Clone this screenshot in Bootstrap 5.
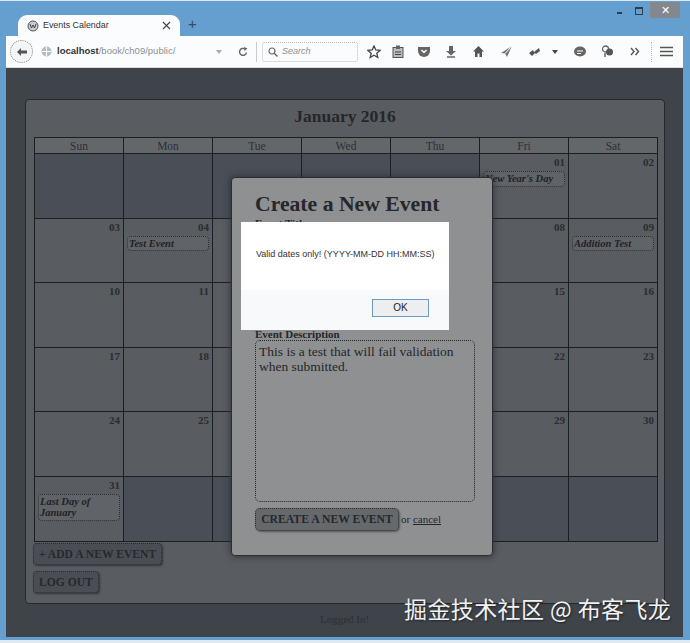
<!DOCTYPE html>
<html lang="en">
<head>
  <meta charset="UTF-8" />
  <title>Events Calendar</title>
  <link href="https://cdn.jsdelivr.net/npm/bootstrap@5.3.3/dist/css/bootstrap.min.css" rel="stylesheet">
  <style>
    html, body { height: 100%; }
    body { background: #dfe9f2; overflow: hidden; font-family: "Liberation Sans", sans-serif; }
    .win-frame { position: relative; width: 690px; height: 640px; padding: 1px 7px 4px 6px; background: #659fcf; border-top: 1px solid #dfe9f2; }
    .title-strip { height: 34px; }
    .tab-shape { width: 162px; height: 21px; margin-left: 12px; padding: 0 9px; background: #fbfcfd; border-radius: 9px 9px 0 0; font-size: 8.900px; color: #333; }
    .tab-x { margin-left: auto; }
    .plus-tab { margin-left: 8px; margin-bottom: 5px; font-size: 15px; line-height: 1; color: #3c4a58; }
    .win-btns { margin-left: auto; margin-right: 3px; align-self: flex-start; }
    .win-min { width: 5px; height: 2px; background: #2f3e4c; margin-right: 13px; margin-top: 10px; }
    .win-max { width: 8px; height: 8px; border: 1px solid #2f3e4c; border-top-width: 2px; margin-right: 7px; margin-top: 5px; }
    .win-close { width: 30px; height: 16px; background: #84888d; color: #fff; font-size: 11px; line-height: 16px; text-align: center; }
    .tool-strip { height: 32px; background: #fbfcfd; font-size: 9px; color: #555; padding-left: 4px; border-bottom: 1px solid #d8dadc; }
    .back-circle { width: 23px; height: 23px; border-radius: 50%; border: 1px dotted #8a8f94; background: #f4f5f6; }
    .url-box { width: 220px; height: 20px; padding-left: 4px; font-size: 9.5px; border-right: 1px solid #ccc; }
    .url-host { font-weight: 700; color: #333; margin-left: 5px; }
    .url-path { color: #8b8f94; }
    .find-box { width: 96px; height: 20px; margin-left: 5px; padding-left: 5px; border: 1px dotted #bbb; border-radius: 2px; font-style: italic; color: #8b8f94; }
    .tool-slot { width: 27.6px; display: flex; justify-content: center; align-items: center; flex-shrink: 0; }
    .slot-star { width: 23px; margin-left: 4.500px; }
    .slot-clip { width: 24.500px; }
    .slot-narrow { width: 14px; margin-right: 4px; }
    .tool-sep { width: 1px; height: 20px; border-left: 1px dotted #bbb; margin-left: 2px; margin-right: 6px; }
    .menu-lines { margin-left: 2px; }
    .page-dim { height: 569px; background: #3f444b; padding: 31px 17px 0 19px; font-family: "Liberation Serif", serif; color: #24272b; }
    .cal-panel { width: 640px; height: 505px; background: #595c60; border: 1px solid #25282c; border-radius: 4px; padding: 5px 8px 0 8px; }
    .cal-title { font-size: 17.500px; font-weight: 700; line-height: 22px; margin: 0 0 10px; text-align: center; }
    .cal-grid { width: 624px; table-layout: fixed; border-collapse: collapse; }
    .cal-grid th { height: 16px; padding: 0; font-size: 11.500px; font-weight: 400; line-height: 14px; text-align: center; background: #64676a; border: 1px solid #1c1f22; color: #2c2f33; }
    .cal-grid td { height: 64.600px; padding: 2px 3px 0 3px; vertical-align: top; border: 1px solid #1c1f22; }
    .cal-grid td.no-day { background: #494e57; }
    .day-num { font-size: 11px; font-weight: 700; line-height: 13px; text-align: right; color: #2a2d31; }
    .event-pill { margin: 2px 0 0 0; padding: 1px 1px; border: 1px dotted #2b2e32; border-radius: 4px; background: #606367; font-size: 10.500px; line-height: 11.500px; font-weight: 700; font-style: italic; color: #1f2226; }
    .btn-stack { margin: 1px 0 0 -1px; gap: 6px; }
    .dim-btn { display: block; margin: 0; padding: 2px 5px; height: 22px; border: 1px dotted #282b2f; border-radius: 4px; background: #4a4e54; font-size: 11.600px; line-height: 17px; font-weight: 700; color: #26292d; box-shadow: 1px 1px 2px #33363a; }
    .foot-note { height: 32px; font-size: 11px; line-height: 30px; text-align: center; padding-right: 2px; color: #2c2f33; }
    .modal-card { position: absolute; left: 231px; top: 176px; width: 262px; height: 379px; padding: 14px 18px 0 23px; background: #8f9092; border: 1px solid #2a2d31; border-radius: 4px; box-shadow: 0 0 7px #2a2d31; font-family: "Liberation Serif", serif; color: #24272b; }
    .modal-head { font-size: 21.700px; font-weight: 700; line-height: 24px; margin: 0; white-space: nowrap; }
    .field-label { display: block; font-size: 11px; font-weight: 700; line-height: 12px; margin: 0; }
    .title-label { margin: 1px 0 99px; }
    .desc-box { width: 220px; height: 162px; padding: 3px 3px; border: 1px dotted #1f2226; border-radius: 5px; background: #8f9092; font-size: 13.500px; line-height: 15px; color: #24272b; }
    .form-row { margin-top: 6px; font-size: 11px; gap: 2px; }
    .make-btn { padding: 0; height: 23px; width: 144px; border: 1px dotted #2a2d31; border-radius: 5px; background: #66696c; font-size: 11.700px; font-weight: 700; color: #24272b; white-space: nowrap; box-shadow: 1px 1px 2px #55585b; }
    .form-row a { color: #24272b; }
    .alert-box { position: absolute; left: 241px; top: 221px; width: 208px; height: 108px; background: #f8f9fa; font-size: 9px; color: #333; }
    .alert-msg { height: 68px; padding: 26px 0 0 15px; background: #fff; line-height: 13px; white-space: nowrap; }
    .ok-btn { width: 57px; height: 18px; margin: 9px 20px 0 auto; display: block; padding: 0; background: #eceef0; border: 1px solid #6b9ac4; font-size: 10px; line-height: 14px; color: #222; }
    .water-mark { position: absolute; left: 404px; top: 592px; font-family: "Noto Sans CJK SC", sans-serif; font-size: 23px; line-height: 30px; letter-spacing: .4px; color: #f0f1f2; text-shadow: 1px 1px 2px #222; white-space: nowrap; }
  </style>
</head>
<body>
  <div class="win-frame">
    <div class="title-strip d-flex align-items-end">
      <div class="tab-shape d-flex align-items-center">
        <svg width="12" height="12" viewBox="0 0 12 12" class="me-1 flex-shrink-0"><circle cx="6" cy="6" r="5" fill="#c9ccd0" stroke="#555"/><path d="M3 4l1.500 4L6 5l1.500 3L9 4" fill="none" stroke="#444"/></svg>
        <span>Events Calendar</span>
        <svg class="tab-x" width="9" height="9" viewBox="0 0 9 9"><path d="M1 1l7 7M8 1L1 8" stroke="#444" stroke-width="1.100"/></svg>
      </div>
      <span class="plus-tab">+</span>
      <div class="win-btns d-flex align-items-start">
        <div class="win-min"></div>
        <div class="win-max"></div>
        <div class="win-close">✕</div>
      </div>
    </div>

    <div class="tool-strip d-flex align-items-center">
      <div class="back-circle d-flex align-items-center justify-content-center flex-shrink-0 me-1">
        <svg width="12" height="10" viewBox="0 0 12 10"><path d="M1 5l4-4v2.500h6v3H5V9z" fill="#555"/></svg>
      </div>
      <div class="url-box d-flex align-items-center flex-shrink-0">
        <svg width="11" height="11" viewBox="0 0 11 11"><circle cx="5.500" cy="5.500" r="5" fill="#b9bcc0"/><path d="M1 5.500h9M5.500 1v9" stroke="#fff"/></svg>
        <span class="url-host">localhost</span><span class="url-path">/book/ch09/public/</span>
        <svg class="ms-auto" width="6" height="4" viewBox="0 0 6 4"><path d="M0 0h6L3 4z" fill="#aaa"/></svg>
        <svg class="mx-2 ms-3" width="10" height="10" viewBox="0 0 10 10"><path d="M8.500 5.500A3.500 3.500 0 1 1 7 2" fill="none" stroke="#666" stroke-width="1.400"/><path d="M6 0l3.500 1.500L6.500 4z" fill="#666"/></svg>
      </div>
      <div class="find-box d-flex align-items-center flex-shrink-0">
        <svg class="me-1" width="10" height="10" viewBox="0 0 10 10"><circle cx="4" cy="4" r="3" fill="none" stroke="#666" stroke-width="1.200"/><path d="M6.200 6.200L9.500 9.500" stroke="#666" stroke-width="1.400"/></svg>
        <span>Search</span>
      </div>
      <div class="tool-slot slot-star"><svg width="14" height="14" viewBox="0 0 14 14"><path d="M7 1l1.800 4 4.200.4-3.200 2.800 1 4.300L7 10.200l-3.800 2.300 1-4.300L1 5.400 5.200 5z" fill="none" stroke="#444" stroke-width="1.300"/></svg></div>
      <div class="tool-slot slot-clip"><svg width="12" height="13" viewBox="0 0 12 13"><rect x="1" y="2.500" width="10" height="10" fill="#bbb" stroke="#555"/><rect x="4" y=".5" width="4" height="3.500" fill="#666"/><path d="M3 7h6M3 9.500h6" stroke="#444"/></svg></div>
      <div class="tool-slot"><svg width="14" height="12" viewBox="0 0 14 12"><path d="M1 1h12v4a6 6 0 0 1-12 0z" fill="#666"/><path d="M4.500 4L7 6.500 9.500 4" fill="none" stroke="#fff" stroke-width="1.500"/></svg></div>
      <div class="tool-slot"><svg width="12" height="13" viewBox="0 0 12 13"><path d="M4 1h4v5h3L6 10.500 1 6h3z" fill="#666"/><path d="M2 12h8" stroke="#666" stroke-width="1.500"/></svg></div>
      <div class="tool-slot"><svg width="13" height="13" viewBox="0 0 13 13"><path d="M6.500 1L1 6.500h2V12h2.500V8.500h2V12H10V6.500h2z" fill="#555"/></svg></div>
      <div class="tool-slot"><svg width="13" height="13" viewBox="0 0 13 13"><path d="M12 1L1 8l4 .5L7 12z" fill="#777"/><path d="M12 1L5 8.500" stroke="#fff"/></svg></div>
      <div class="tool-slot"><svg width="13" height="10" viewBox="0 0 13 10"><path d="M1 6l4-3 1 2 5-4 1 3-4 3-1-1-3 3z" fill="#555"/></svg></div>
      <div class="tool-slot slot-narrow"><svg width="6" height="4" viewBox="0 0 6 4"><path d="M0 0h6L3 4z" fill="#444"/></svg></div>
      <div class="tool-slot"><svg width="14" height="12" viewBox="0 0 14 12"><ellipse cx="7" cy="5.500" rx="6" ry="5" fill="#666"/><path d="M4 5h6M4 7.500h4" stroke="#fff"/></svg></div>
      <div class="tool-slot"><svg width="13" height="13" viewBox="0 0 13 13"><circle cx="4.500" cy="4" r="3" fill="none" stroke="#666" stroke-width="1.300"/><circle cx="8.500" cy="7" r="3.500" fill="#555"/><path d="M4 8v4" stroke="#666" stroke-width="1.500"/></svg></div>
      <div class="tool-slot"><svg width="10" height="9" viewBox="0 0 10 9"><path d="M1 1l3 3.500L1 8M5.500 1l3 3.500-3 3.500" fill="none" stroke="#555" stroke-width="1.400"/></svg></div>
      <div class="tool-sep"></div>
      <svg width="13" height="11" viewBox="0 0 13 11" class="menu-lines"><path d="M0 1.500h13M0 5.500h13M0 9.500h13" stroke="#555" stroke-width="1.600"/></svg>
    </div>

    <div class="page-dim">
      <div class="cal-panel">
        <h2 class="cal-title">January 2016</h2>
        <table class="cal-grid">
          <thead>
            <tr><th>Sun</th><th>Mon</th><th>Tue</th><th>Wed</th><th>Thu</th><th>Fri</th><th>Sat</th></tr>
          </thead>
          <tbody>
            <tr>
              <td class="no-day"></td><td class="no-day"></td><td class="no-day"></td><td class="no-day"></td><td class="no-day"></td>
              <td><div class="day-num">01</div><div class="event-pill">New Year's Day</div></td>
              <td><div class="day-num">02</div></td>
            </tr>
            <tr>
              <td><div class="day-num">03</div></td>
              <td><div class="day-num">04</div><div class="event-pill">Test Event</div></td>
              <td></td><td></td><td></td>
              <td><div class="day-num">08</div></td>
              <td><div class="day-num">09</div><div class="event-pill">Addition Test</div></td>
            </tr>
            <tr>
              <td><div class="day-num">10</div></td><td><div class="day-num">11</div></td><td></td><td></td><td></td><td><div class="day-num">15</div></td><td><div class="day-num">16</div></td>
            </tr>
            <tr>
              <td><div class="day-num">17</div></td><td><div class="day-num">18</div></td><td></td><td></td><td></td><td><div class="day-num">22</div></td><td><div class="day-num">23</div></td>
            </tr>
            <tr>
              <td><div class="day-num">24</div></td><td><div class="day-num">25</div></td><td></td><td></td><td></td><td><div class="day-num">29</div></td><td><div class="day-num">30</div></td>
            </tr>
            <tr>
              <td><div class="day-num">31</div><div class="event-pill">Last Day of January</div></td>
              <td class="no-day"></td><td class="no-day"></td><td class="no-day"></td><td class="no-day"></td><td class="no-day"></td><td class="no-day"></td>
            </tr>
          </tbody>
        </table>
        <div class="btn-stack d-flex flex-column align-items-start">
          <button class="dim-btn" type="button">+ ADD A NEW EVENT</button>
          <button class="dim-btn" type="button">LOG OUT</button>
        </div>
      </div>
      <div class="foot-note">Logged In!</div>
    </div>

    <div class="modal-card">
      <h2 class="modal-head">Create a New Event</h2>
      <label class="field-label title-label">Event Title</label>
      <label class="field-label">Event Description</label>
      <div class="desc-box">This is a test that will fail validation when submitted.</div>
      <div class="form-row d-flex align-items-center">
        <button class="make-btn" type="button">CREATE A NEW EVENT</button>
        <span>or <a href="#">cancel</a></span>
      </div>
    </div>

    <div class="alert-box">
      <div class="alert-msg">Valid dates only! (YYYY-MM-DD HH:MM:SS)</div>
      <button class="ok-btn" type="button">OK</button>
    </div>

    <div class="water-mark">掘金技术社区 @ 布客飞龙</div>
  </div>
  <script src="https://cdn.jsdelivr.net/npm/bootstrap@5.3.3/dist/js/bootstrap.bundle.min.js"></script>
</body>
</html>
